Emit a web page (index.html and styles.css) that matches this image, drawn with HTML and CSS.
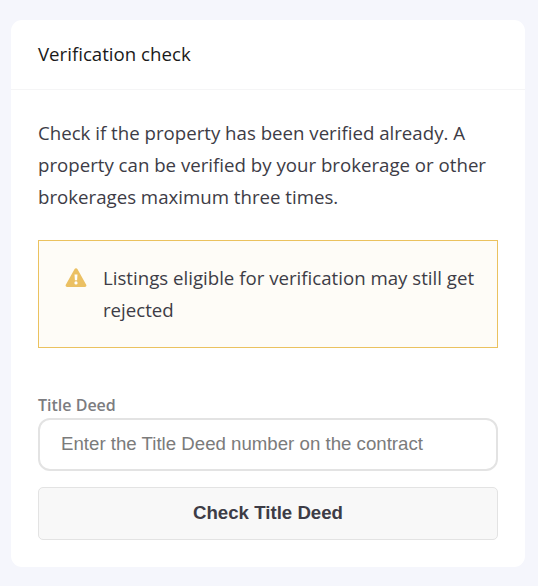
FILE: index.html
```html
<!DOCTYPE html>
<html lang="en">
<head>
    <meta charset="UTF-8">
    <meta name="viewport" content="width=device-width, initial-scale=1.0">
    <title>Verification check</title>
    <link rel="stylesheet" href="styles.css">
</head>
<body>
    <section class="card">
        <h2 class="card-header">Verification check</h2>
        <div class="card-body">
            <p class="intro">Check if the property has been verified already. A property can be verified by your brokerage or other brokerages maximum three times.</p>
            <div class="alert">
                <svg class="alert-icon" width="22" height="20" viewBox="0 0 22 20">
                    <path d="M9.6 1a1.6 1.6 0 0 1 2.8 0l8.8 15.8a1.5 1.5 0 0 1-1.3 2.2H2.1a1.5 1.5 0 0 1-1.3-2.2z" fill="#ebc063"/>
                    <path d="M9.5 6.6h3l-.4 5.6H9.9z" fill="#fff"/>
                    <circle cx="11" cy="14.9" r="1.6" fill="#fff"/>
                </svg>
                <p>Listings eligible for verification may still get rejected</p>
            </div>
            <form class="deed-form">
                <label for="title-deed">Title Deed</label>
                <input id="title-deed" type="text" placeholder="Enter the Title Deed number on the contract">
                <button type="button">Check Title Deed</button>
            </form>
        </div>
    </section>
</body>
</html>
```
FILE: styles.css
```css
* {
    box-sizing: border-box;
}
body {
    margin: 0;
    padding: 20px 13px 0 11px;
    font-family: 'Open Sans', sans-serif;
    font-size: 18.67px;
    line-height: 32px;
    background: #f5f6fc;
    color: #3d3c46;
}
p {
    margin: 0;
}
.card {
    height: 547px;
    background: #fff;
    border-radius: 11px;
}
.card-header {
    height: 70px;
    margin: 0;
    padding: 18px 27px;
    border-bottom: 1px solid #f5f5f6;
    font-size: 18.67px;
    font-weight: 400;
    color: #1a1a1a;
}
.card-body {
    padding: 27px;
}
.alert {
    display: flex;
    gap: 16px;
    height: 108px;
    margin-top: 27px;
    padding: 21px 20px 21px 26px;
    border: 1px solid #ebc25f;
    background: #fefcf7;
}
.alert-icon {
    flex: none;
    margin-top: 6px;
}
.deed-form {
    display: flex;
    flex-direction: column;
    margin-top: 45px;
}
.deed-form label {
    height: 25px;
    font-size: 16px;
    font-weight: 600;
    line-height: 24px;
    color: #7c7c80;
}
.deed-form input {
    height: 53px;
    padding: 0 21px 2px;
    border: 2px solid #e3e3e3;
    border-radius: 12px;
    font-family: 'Liberation Sans', sans-serif;
    font-size: 18.67px;
}
.deed-form input::placeholder {
    color: #7b7b7b;
}
.deed-form button {
    height: 53px;
    margin-top: 16px;
    padding: 0 6px 2px;
    border: 1px solid #e3e3e3;
    border-radius: 5px;
    background: #f8f8f8;
    font-family: 'Liberation Sans', sans-serif;
    font-size: 18.67px;
    font-weight: 700;
    color: #3d3c46;
}
```
